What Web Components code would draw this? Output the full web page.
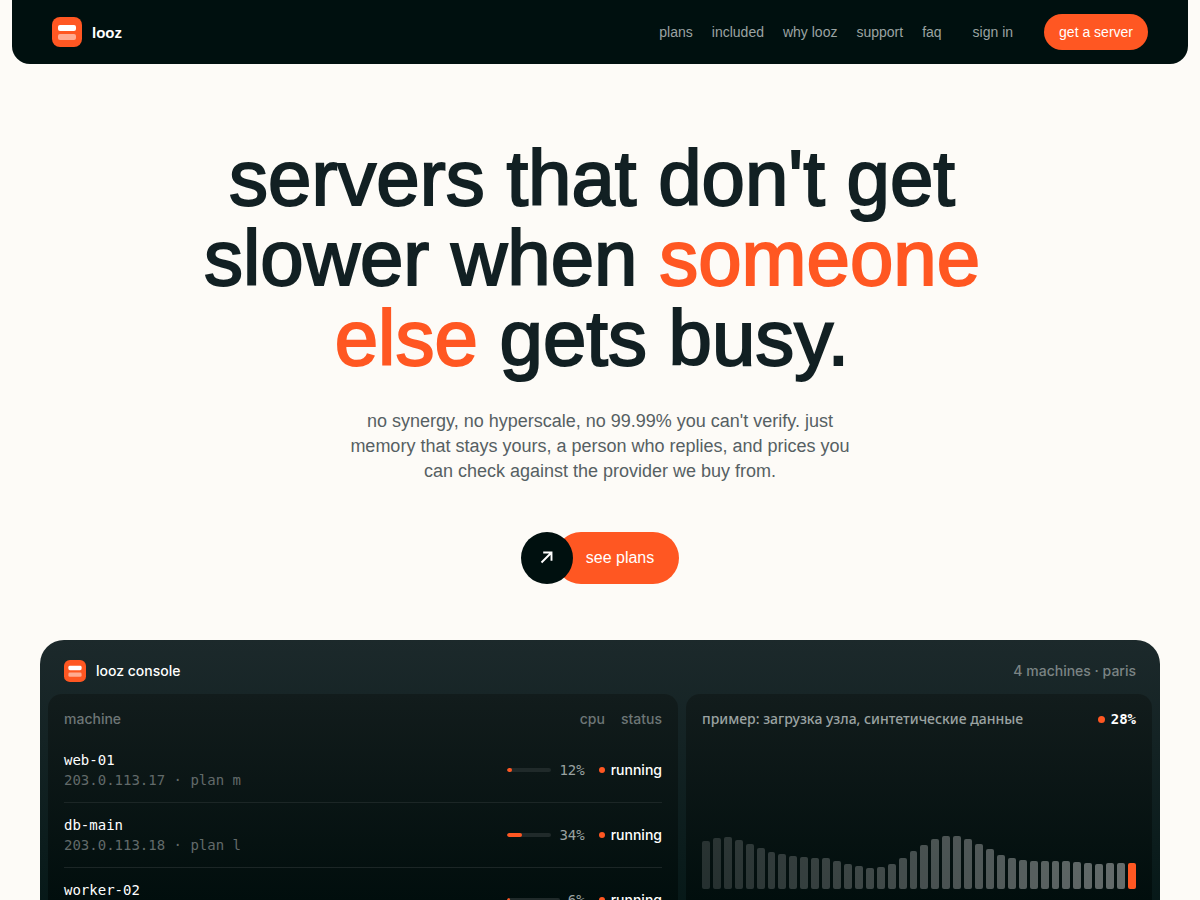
<!DOCTYPE html>
<html lang="en">
<head>
<meta charset="utf-8">
<meta name="viewport" content="width=device-width, initial-scale=1">
<title>looz</title>
<style>
  html {
    scrollbar-width: none;
  }
  body {
    margin: 0;
    min-height: 100vh;
    background: #fdfbf7;
    color: #122023;
    font-family: "Liberation Sans", Arial, sans-serif;
    --accent: #ff5722;
    --ink: #00100f;
    --ui: Inter, "Noto Sans", sans-serif;
    --mono: "DejaVu Sans Mono", monospace;
  }
</style>
</head>
<body>
<looz-header>
  <a slot="nav" href="#plans">plans</a>
  <a slot="nav" href="#included">included</a>
  <a slot="nav" href="#why">why looz</a>
  <a slot="nav" href="#support">support</a>
  <a slot="nav" href="#faq">faq</a>
  <a slot="account" href="#signin">sign in</a>
</looz-header>
<main>
  <looz-hero>
    <span slot="title">servers that don't get<br>slower when <em>someone<br>else</em> gets busy.</span>
    <span slot="lead">no synergy, no hyperscale, no 99.99% you can't verify. just<br>memory that stays yours, a person who replies, and prices you<br>can check against the provider we buy from.</span>
    <looz-cta href="#plans">see plans</looz-cta>
  </looz-hero>
  <looz-console>
    <machine-list></machine-list>
    <load-chart value="28%">пример: загрузка узла, синтетические данные</load-chart>
  </looz-console>
</main>

<script>
/**
 * Create a template from a string of markup.
 *
 * @param {string} html - The markup.
 * @returns {HTMLTemplateElement} The template.
 */
function createTemplate (html) {
  const template = document.createElement('template')
  template.innerHTML = html
  return template
}

const logoTemplate = createTemplate(`
<style>
  :host {
    display: block;
    width: var(--logo-size, 30px);
    height: var(--logo-size, 30px);
  }
  svg {
    display: block;
    width: 100%;
    height: 100%;
  }
</style>
<svg viewBox="0 0 30 30" aria-hidden="true">
  <rect width="30" height="30" rx="8" fill="#ff5722"/>
  <rect x="6" y="8" width="18" height="6" rx="2" fill="#fff"/>
  <rect x="6" y="17" width="18" height="6" rx="2" fill="#fff" fill-opacity=".5"/>
</svg>
`)

customElements.define('looz-logo',
  /**
   * The two-bar logo mark.
   */
  class extends HTMLElement {
    constructor () {
      super()
      this.attachShadow({ mode: 'open' })
        .appendChild(logoTemplate.content.cloneNode(true))
    }
  }
)

const headerTemplate = createTemplate(`
<style>
  :host {
    display: block;
    margin: 0 12px;
    background: var(--ink);
    border-radius: 0 0 18px 18px;
    font-size: 14px;
  }
  header {
    display: flex;
    align-items: center;
    justify-content: space-between;
    height: 64px;
    padding: 0 40px;
  }
  .brand {
    display: flex;
    align-items: center;
    gap: 10px;
    color: #fff;
    font-size: 15px;
    font-weight: 700;
    text-decoration: none;
  }
  nav {
    display: flex;
    align-items: center;
    gap: 19px;
  }
  ::slotted(a) {
    color: #9ba3a2;
    text-decoration: none;
  }
  ::slotted([slot="account"]) {
    margin: 0 12px;
  }
  button {
    height: 36px;
    padding: 0 15px;
    border: 0;
    border-radius: 18px;
    background: var(--accent);
    color: #fff;
    font: inherit;
  }
</style>
<header>
  <a class="brand" href="#top"><looz-logo></looz-logo>looz</a>
  <nav>
    <slot name="nav"></slot>
    <slot name="account"></slot>
    <button type="button">get a server</button>
  </nav>
</header>
`)

customElements.define('looz-header',
  /**
   * The bar at the top of the page.
   */
  class extends HTMLElement {
    constructor () {
      super()
      this.attachShadow({ mode: 'open' })
        .appendChild(headerTemplate.content.cloneNode(true))
    }
  }
)

const heroTemplate = createTemplate(`
<style>
  :host {
    display: flex;
    flex-direction: column;
    align-items: center;
    padding: 74px 40px 56px;
    text-align: center;
  }
  h1 {
    margin: 0;
    padding-right: 16px;
    font-size: 78px;
    font-weight: 400;
    line-height: 80px;
    -webkit-text-stroke: 2px currentColor;
  }
  p {
    margin: 31px 0 48px;
    color: #566063;
    font-size: 18px;
    line-height: 25px;
  }
</style>
<h1><slot name="title"></slot></h1>
<p><slot name="lead"></slot></p>
<slot></slot>
`)

customElements.define('looz-hero',
  /**
   * Headline, lead text and the call to action.
   */
  class extends HTMLElement {
    constructor () {
      super()
      this.attachShadow({ mode: 'open' })
        .appendChild(heroTemplate.content.cloneNode(true))
    }

    /**
     * Colours the emphasised words of the title.
     */
    connectedCallback () {
      this.querySelectorAll('em').forEach(em => {
        em.style.fontStyle = 'normal'
        em.style.color = 'var(--accent)'
      })
    }
  }
)

const ctaTemplate = createTemplate(`
<style>
  :host {
    display: block;
  }
  a {
    display: flex;
    color: #fff;
    font-size: 16px;
    line-height: 52px;
    text-decoration: none;
  }
  .arrow {
    z-index: 1;
    display: grid;
    place-items: center;
    width: 52px;
    height: 52px;
    border-radius: 50%;
    background: var(--ink);
  }
  .label {
    margin-left: -18px;
    padding: 0 25px 0 31px;
    border-radius: 26px;
    background: var(--accent);
  }
</style>
<a>
  <span class="arrow">
    <svg width="16" height="16" viewBox="0 0 16 16" fill="none" stroke="#fff" stroke-width="1.9" aria-hidden="true">
      <path d="M2.500 12.500 12 3M4.200 2.500H12.500V10.800"/>
    </svg>
  </span>
  <span class="label"><slot></slot></span>
</a>
`)

customElements.define('looz-cta',
  /**
   * Pill link with a round arrow in front.
   */
  class extends HTMLElement {
    constructor () {
      super()
      this.attachShadow({ mode: 'open' })
        .appendChild(ctaTemplate.content.cloneNode(true))
      this.shadowRoot.querySelector('a').href = this.getAttribute('href') || '#'
    }
  }
)

const consoleTemplate = createTemplate(`
<style>
  :host {
    display: block;
    margin: 0 40px;
    padding: 0 8px 8px;
    border-radius: 24px;
    background: linear-gradient(#1c292b, #021514 320px);
    color: #fff;
    font: 500 14px/20px var(--ui);
  }
  header {
    display: flex;
    align-items: center;
    gap: 10px;
    padding: 20px 16px 12px;
  }
  looz-logo {
    --logo-size: 22px;
  }
  .summary {
    margin-left: auto;
    color: #7b8484;
  }
  .panels {
    display: grid;
    grid-template-columns: 630fr 466fr;
    gap: 8px;
  }
  ::slotted(*) {
    padding: 15px 16px 16px;
    border-radius: 14px;
    background: linear-gradient(#121c1c, #000d0c 220px);
  }
</style>
<header>
  <looz-logo></looz-logo>
  <span>looz console</span>
  <span class="summary">4 machines · paris</span>
</header>
<div class="panels"><slot></slot></div>
`)

customElements.define('looz-console',
  /**
   * The frame of the console preview.
   */
  class extends HTMLElement {
    constructor () {
      super()
      this.attachShadow({ mode: 'open' })
        .appendChild(consoleTemplate.content.cloneNode(true))
    }
  }
)

const machines = [
  { name: 'web-01', ip: '203.0.113.17', plan: 'm', cpu: 12 },
  { name: 'db-main', ip: '203.0.113.18', plan: 'l', cpu: 34 },
  { name: 'worker-02', ip: '203.0.113.19', plan: 's', cpu: 6 }
]

const listTemplate = createTemplate(`
<style>
  :host {
    display: block;
  }
  table {
    width: 100%;
    border-collapse: collapse;
  }
  th, td {
    padding: 0;
    text-align: left;
  }
  th {
    height: 20px;
    padding-bottom: 9px;
    color: #6d7676;
    font-weight: 500;
  }
  th + th, td + td {
    width: 1px;
    text-align: right;
    white-space: nowrap;
  }
  th span + span {
    margin-left: 16px;
  }
  td {
    height: 64px;
    border-bottom: 1px solid #1c2626;
  }
  .name, .meta, .cpu {
    font-family: var(--mono);
    font-weight: 400;
  }
  .meta {
    color: #626a6a;
  }
  .cpu {
    display: flex;
    align-items: center;
    gap: 8px;
    width: 78px;
    margin-right: 14px;
    color: #9aa2a1;
  }
  .meter {
    flex: 1;
    height: 4px;
    border-radius: 2px;
    background: #202a2a;
    overflow: hidden;
  }
  .meter i {
    display: block;
    height: 4px;
    border-radius: 2px;
    background: var(--accent);
  }
  .status {
    display: flex;
    align-items: center;
    gap: 6px;
  }
  .status::before {
    content: "";
    width: 6px;
    height: 6px;
    border-radius: 50%;
    background: var(--accent);
  }
</style>
<table>
  <thead><tr><th>machine</th><th colspan="2"><span>cpu</span><span>status</span></th></tr></thead>
  <tbody></tbody>
</table>
`)

customElements.define('machine-list',
  /**
   * Table of the machines and their state.
   */
  class extends HTMLElement {
    constructor () {
      super()
      this.attachShadow({ mode: 'open' })
        .appendChild(listTemplate.content.cloneNode(true))
      const body = this.shadowRoot.querySelector('tbody')
      machines.forEach(machine => {
        const row = document.createElement('tr')
        row.innerHTML = `
          <td><div class="name">${machine.name}</div><div class="meta">${machine.ip} · plan ${machine.plan}</div></td>
          <td><div class="cpu"><span class="meter"><i style="width: ${machine.cpu}%"></i></span>${machine.cpu}%</div></td>
          <td><div class="status">running</div></td>`
        body.appendChild(row)
      })
    }
  }
)

// Load samples, oldest first
const samples = [48, 51, 52, 49, 45, 41, 37, 35, 33, 32, 31, 31, 28, 25, 23, 21, 22, 25, 31, 38, 44, 50, 53, 53, 50, 45, 40, 34, 31, 29, 28, 28, 28, 28, 27, 26, 25, 26, 26, 26]

const chartTemplate = createTemplate(`
<style>
  :host {
    display: block;
  }
  .head {
    display: flex;
    align-items: center;
    gap: 6px;
    color: #9ba3a2;
    font-family: "Noto Sans", sans-serif;
    white-space: nowrap;
  }
  .head i {
    width: 7px;
    height: 7px;
    margin-left: auto;
    border-radius: 50%;
    background: var(--accent);
  }
  b {
    color: #fff;
    font-family: var(--mono);
  }
  .bars {
    display: flex;
    align-items: flex-end;
    gap: 3px;
    height: 160px;
  }
  .bars i {
    flex: 1;
    border-radius: 2px;
    background: #fff;
  }
  .bars i:last-child {
    background: var(--accent);
  }
</style>
<div class="head"><slot></slot><i></i><b></b></div>
<div class="bars"></div>
`)

customElements.define('load-chart',
  /**
   * Bar chart of the node load.
   */
  class extends HTMLElement {
    constructor () {
      super()
      this.attachShadow({ mode: 'open' })
        .appendChild(chartTemplate.content.cloneNode(true))
      this.shadowRoot.querySelector('b').textContent = this.getAttribute('value')
      const bars = this.shadowRoot.querySelector('.bars')
      samples.forEach((sample, i) => {
        const bar = document.createElement('i')
        bar.style.height = `${sample}px`
        // Older bars fade out
        if (i < samples.length - 1) {
          bar.style.opacity = 0.14 + 0.26 * i / samples.length
        }
        bars.appendChild(bar)
      })
    }
  }
)
</script>
</body>
</html>
